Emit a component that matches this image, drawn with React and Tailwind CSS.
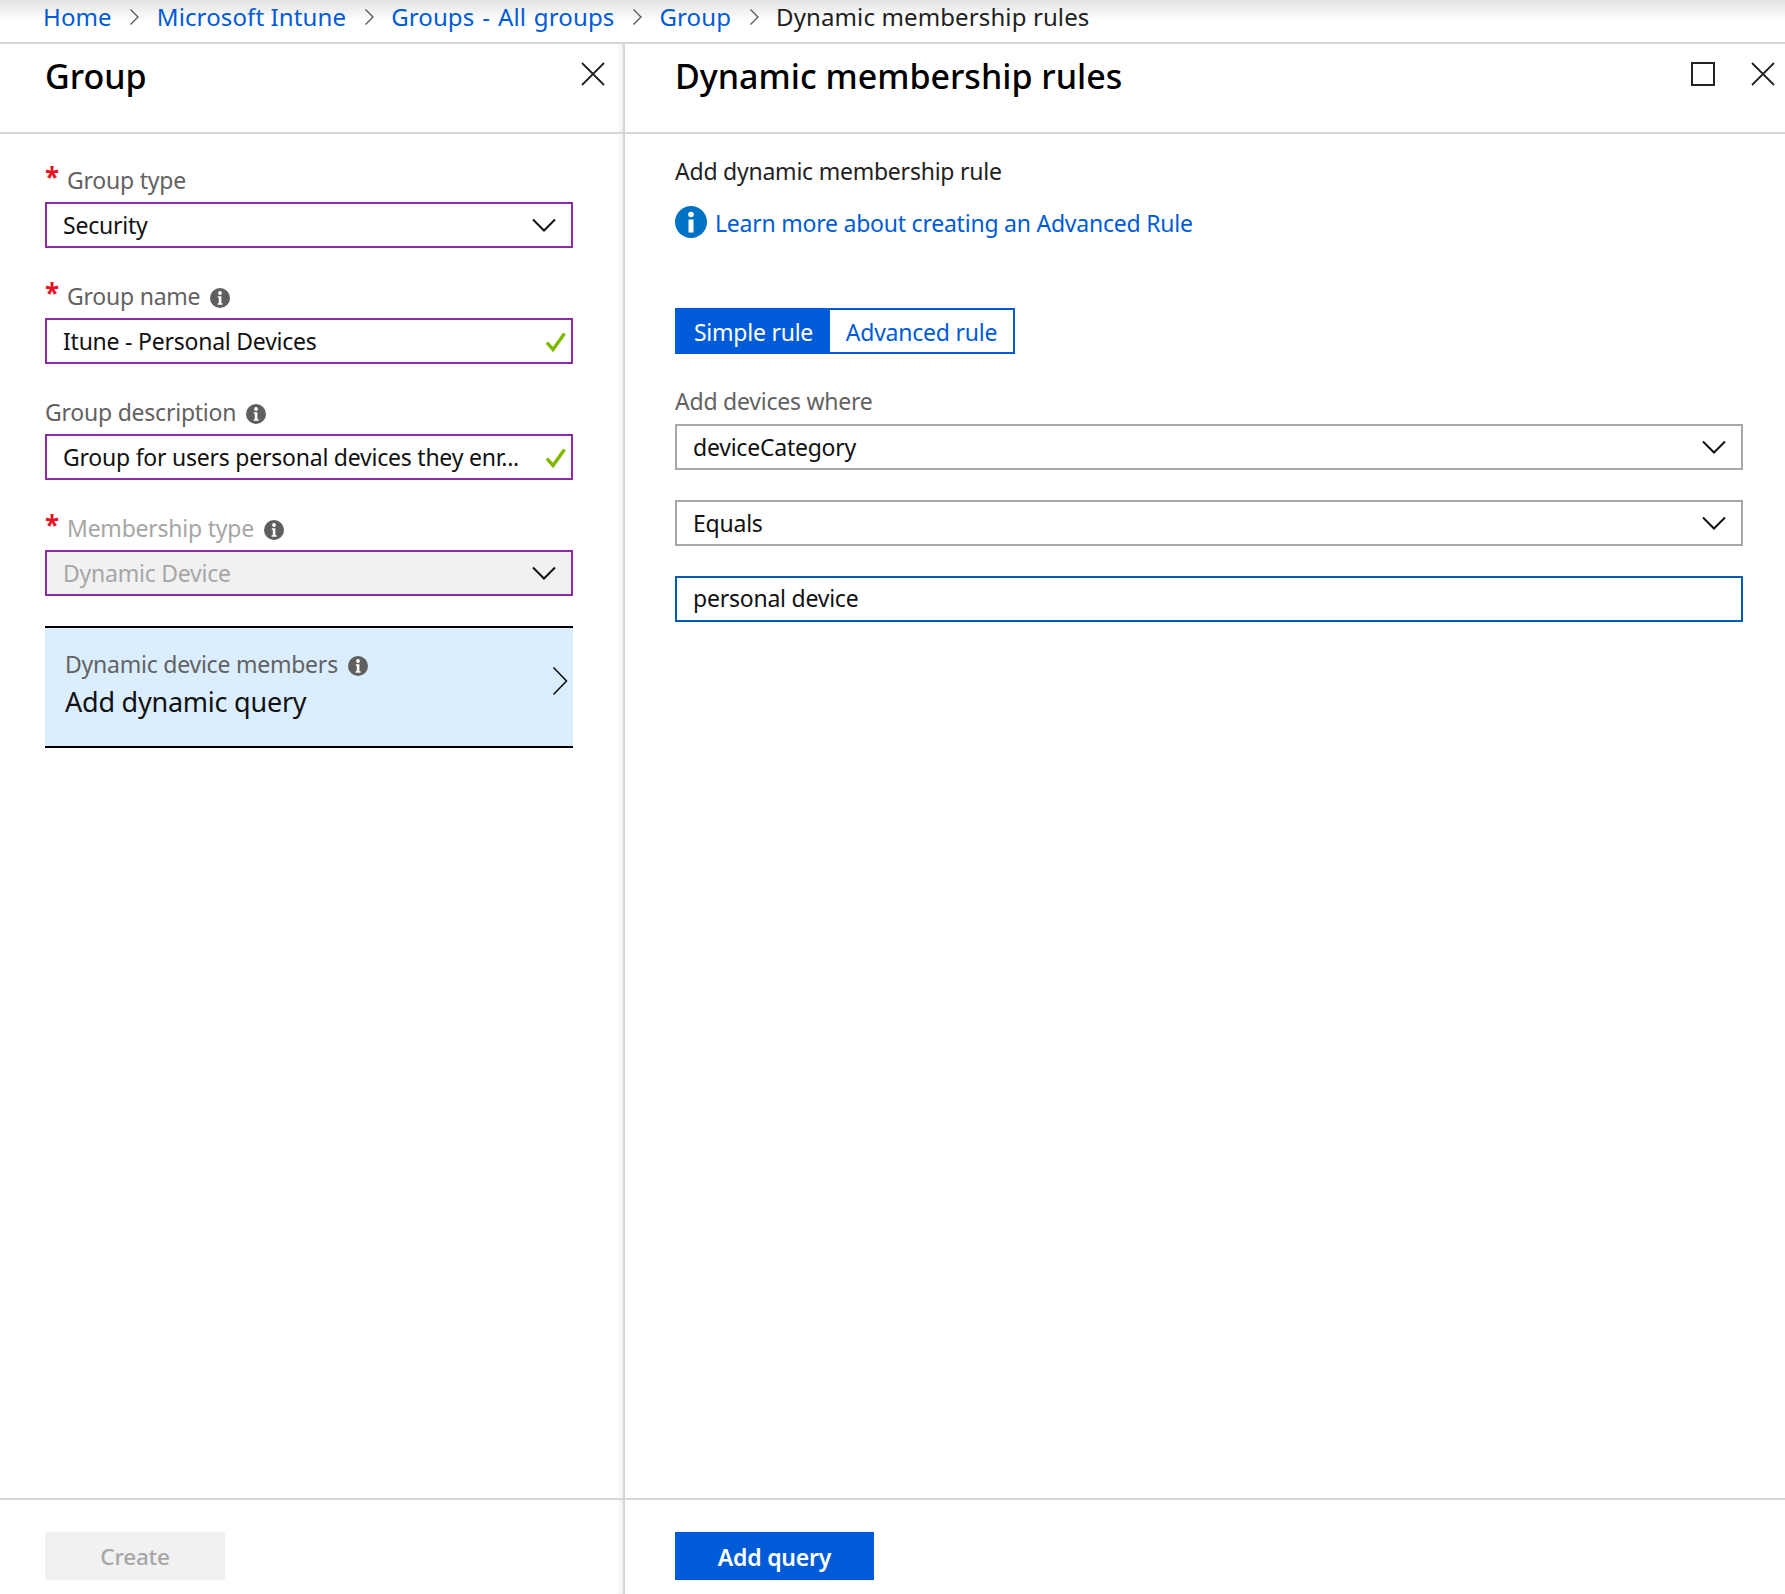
const font = "font-['Noto_Sans','Open_Sans',sans-serif]";

function Chevron({ className }) {
  return (
    <svg className={className} viewBox="0 0 24 14" fill="none" stroke="currentColor" strokeWidth="2">
      <path d="M1 1.5l11 11 11-11" />
    </svg>
  );
}

function Crumbsep() {
  return (
    <svg className="w-[10px] h-[18px] text-[#555] mx-[17.5px]" viewBox="0 0 10 18" fill="none" stroke="currentColor" strokeWidth="1.3">
      <path d="M1.5 1.5L9 9l-7.5 7.5" />
    </svg>
  );
}

function CloseIcon() {
  return (
    <svg className="w-6 h-6 text-[#222]" viewBox="0 0 24 24" fill="none" stroke="currentColor" strokeWidth="1.8">
      <path d="M1 1l22 22M23 1L1 23" />
    </svg>
  );
}

function InfoDot({ className = '' }) {
  return (
    <svg className={`w-[20px] h-[20px] shrink-0 ${className}`} viewBox="0 0 20 20">
      <circle cx="10" cy="10" r="10" fill="#5f5f5f" />
      <circle cx="10" cy="5" r="1.9" fill="#fff" />
      <path d="M7.8 8.2h3.6v7h1.2v1.5H7.6v-1.5h1.2V9.7h-1z" fill="#fff" />
    </svg>
  );
}

function Check() {
  return (
    <svg className="w-[20px] h-[20px] shrink-0" viewBox="0 0 20 20" fill="none" stroke="#7fba00" strokeWidth="3.4">
      <path d="M1 10.5l6 7L18.5 1.5" />
    </svg>
  );
}

function Label({ required, children, info, muted }) {
  return (
    <div className={`flex items-center h-[44px] ${muted ? 'text-[#a6a6a6]' : 'text-[#626262]'}`}>
      {required && <span className="text-[#e81123] w-[22px] text-[26px] font-bold -mt-[6px] leading-none">*</span>}
      <span>{children}</span>
      {info && <InfoDot className="ml-[10px] mt-[3px]" />}
    </div>
  );
}

function Field({ children, check, chevron, disabled }) {
  return (
    <div className={`h-[46px] border-2 border-[#8a2da5] flex items-center justify-between pl-[16px] ${disabled ? 'bg-[#f1f1f1] text-[#a6a6a6]' : 'bg-white text-[#111]'}`}>
      <span className="whitespace-nowrap">{children}</span>
      {check && <span className="mr-[5px] mt-[2px]"><Check /></span>}
      {chevron && <Chevron className="w-[24px] h-[14px] text-[#111] mr-[15px]" />}
    </div>
  );
}

function GrayField({ children }) {
  return (
    <div className="h-[46px] border-2 border-[#a8a8a8] flex items-center justify-between pl-[16px] text-[#111]">
      <span>{children}</span>
      <Chevron className="w-[24px] h-[14px] text-[#111] mr-[15px]" />
    </div>
  );
}

export default function App() {
  return (
    <div className={`w-[1785px] h-[1594px] flex flex-col bg-white overflow-hidden ${font}`}>
      <div className="h-[44px] shrink-0 border-b-2 border-[#d6d6d6] bg-gradient-to-b from-[#e2e2e2] to-white to-50% flex items-center pl-[43px] pb-[9px] text-[24px] tracking-[0.12px] text-[#005bd9] whitespace-nowrap">
        <span>Home</span>
        <Crumbsep />
        <span>Microsoft Intune</span>
        <Crumbsep />
        <span className="[word-spacing:1.5px]">Groups - All groups</span>
        <Crumbsep />
        <span>Group</span>
        <Crumbsep />
        <span className="text-[#222]">Dynamic membership rules</span>
      </div>

      <div className="flex-1 flex min-h-0 text-[23px] tracking-[-0.23px]">
        <div className="w-[625px] shrink-0 flex flex-col border-r-2 border-[#d6d6d6] shadow-[inset_-8px_0_8px_-8px_rgba(0,0,0,0.12)]">
          <div className="h-[90px] shrink-0 border-b-2 border-[#d6d6d6] flex justify-between pl-[45px] pr-[18px]">
            <h2 className="text-[34px] tracking-normal leading-none font-medium text-black mt-[15px]">Group</h2>
            <div className="mt-[18px]"><CloseIcon /></div>
          </div>

          <div className="flex-1 flex flex-col w-[528px] ml-[45px] pt-[24px]">
            <Label required>Group type</Label>
            <Field chevron>Security</Field>
            <div className="mt-[26px]">
              <Label required info>Group name</Label>
              <Field check>Itune - Personal Devices</Field>
            </div>
            <div className="mt-[26px]">
              <Label info>Group description</Label>
              <Field check>Group for users personal devices they enr...</Field>
            </div>
            <div className="mt-[26px]">
              <Label required info muted>Membership type</Label>
              <Field chevron disabled>Dynamic Device</Field>
            </div>
            <div className="mt-[30px] h-[122px] bg-[#dbeeff] border-y-2 border-black flex items-center justify-between pl-[20px] pr-[5px]">
              <div className="pb-[4px]">
                <div className="flex items-center h-[34px] text-[#626262]">
                  Dynamic device members
                  <InfoDot className="ml-[10px] mt-[3px]" />
                </div>
                <div className="text-[27px] leading-[42px] text-[#111]">Add dynamic query</div>
              </div>
              <svg className="w-[16px] h-[30px] text-[#111] mb-[12px]" viewBox="0 0 16 30" fill="none" stroke="currentColor" strokeWidth="1.6">
                <path d="M1.5 1.5L14.5 15 1.5 28.5" />
              </svg>
            </div>
          </div>

          <div className="h-[96px] shrink-0 border-t-2 border-[#d6d6d6] pl-[45px] pt-[32px]">
            <button className="w-[180px] h-[48px] pt-[2px] bg-[#f1f1f1] text-[#a6a6a6] text-[22.5px] font-medium">Create</button>
          </div>
        </div>

        <div className="flex-1 flex flex-col min-w-0">
          <div className="h-[90px] shrink-0 border-b-2 border-[#d6d6d6] flex justify-between pl-[50px] pr-[10px]">
            <h1 className="text-[34px] tracking-normal leading-none font-medium text-black mt-[15px]">Dynamic membership rules</h1>
            <div className="flex gap-[36px] mt-[18px]">
              <div className="w-6 h-6 border-2 border-[#222]" />
              <CloseIcon />
            </div>
          </div>

          <div className="flex-1 flex flex-col w-[1068px] ml-[50px] pt-[20px]">
            <div className="text-[#222] h-[34px] flex items-center">Add dynamic membership rule</div>
            <div className="flex items-center mt-[18px] h-[32px] gap-[8px]">
              <svg className="w-[32px] h-[32px] shrink-0" viewBox="0 0 32 32">
                <circle cx="16" cy="16" r="16" fill="#0072c6" />
                <circle cx="16" cy="8.5" r="2.8" fill="#fff" />
                <path d="M13.5 13.5h5v13h-5z" fill="#fff" />
              </svg>
              <span className="text-[#005bd9] mt-[3px]">Learn more about creating an Advanced Rule</span>
            </div>
            <div className="mt-[70px] flex w-[340px] h-[46px] border-2 border-[#005bd9]">
              <div className="w-[153px] pt-[2px] bg-[#005bd9] text-white flex items-center justify-center">Simple rule</div>
              <div className="flex-1 pt-[2px] text-[#005bd9] flex items-center justify-center">Advanced rule</div>
            </div>
            <div className="mt-[30px] h-[34px] flex items-center text-[#626262]">Add devices where</div>
            <div className="mt-[6px]"><GrayField>deviceCategory</GrayField></div>
            <div className="mt-[30px]"><GrayField>Equals</GrayField></div>
            <div className="mt-[30px] h-[46px] pb-[2px] border-2 border-[#005bb5] flex items-center pl-[16px] text-[#111]">personal device</div>
          </div>

          <div className="h-[96px] shrink-0 border-t-2 border-[#d6d6d6] pl-[50px] pt-[32px]">
            <button className="w-[199px] h-[48px] pt-[2px] bg-[#005bd9] text-white font-semibold">Add query</button>
          </div>
        </div>
      </div>
    </div>
  );
}
